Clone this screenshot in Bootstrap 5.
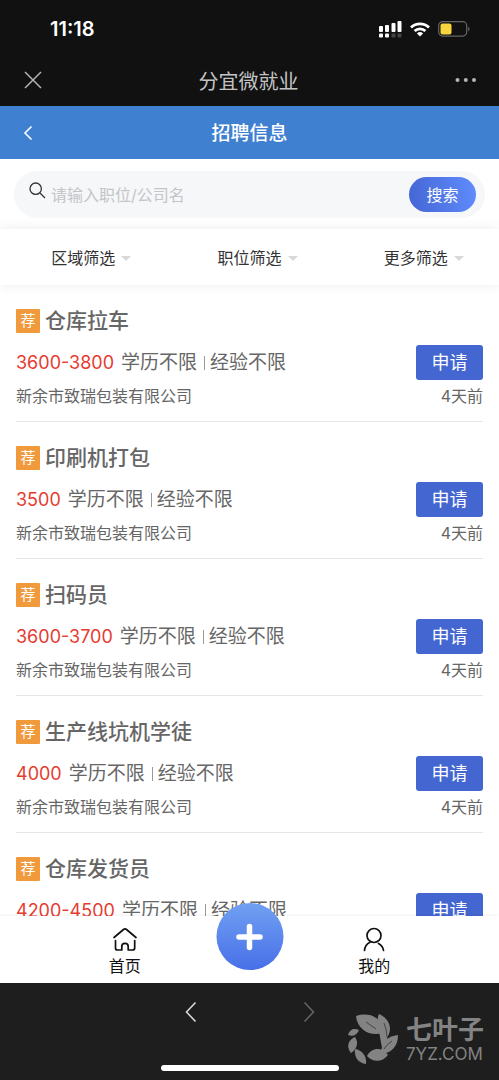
<!DOCTYPE html>
<html lang="zh-CN">
<head>
<meta charset="utf-8">
<meta name="viewport" content="width=device-width, initial-scale=1">
<title>分宜微就业 - 招聘信息</title>
<link href="https://cdn.jsdelivr.net/npm/bootstrap@5.3.0/dist/css/bootstrap.min.css" rel="stylesheet">
<style>
  body { font-family: Inter, "Noto Sans CJK SC", sans-serif; font-size: 16px; line-height: 24px; color: #666; background: #fff; }
  svg { display: block; }
  button { line-height: inherit; }
  .icon-btn { background: none; border: 0; padding: 0; display: block; }

  .phone-top { background: #111; color: #c4c4c4; }
  .status-row { height: 54px; padding: 4px 29px 0 50px; }
  .clock { color: #fff; font-size: 20px; font-weight: 600; }
  .wx-row { height: 52px; padding: 0 22px 0 24px; }
  .wx-title { font-size: 20px; font-weight: 400; padding-top: 3px; }

  .app-head { background: #3f80d1; color: #fff; height: 53px; padding: 0 22px; }
  .app-title { font-size: 19px; font-weight: 500; line-height: 24px; padding-top: 3px; }
  .side { width: 32px; }

  .search-area { padding: 12px 14px 11px; }
  .search-pill { background: #f5f7f9; height: 47px; padding: 0 9px 0 15px; }
  .search-input { border: 0; background: none; outline: 0; min-width: 0; padding: 0 5px; color: #333; }
  .search-input::placeholder { color: #c3c5c8; opacity: 1; }
  .search-btn { width: 67px; height: 35px; border: 0; color: #fff; background: linear-gradient(80deg, #4565d4, #608cfd); }

  .filters { height: 56px; box-shadow: 0 0 12px rgba(0, 0, 0, .08); }
  .filter-btn { background: none; border: 0; color: #333; padding: 2px 0 0 16px; gap: 6px; }
  .caret { border: 5px solid transparent; border-top-color: #d9d9d9; border-bottom: 0; }

  .jobs { flex: 1 1 0; min-height: 0; overflow-y: auto; scrollbar-width: none; padding: 0 16px; }
  .jobs::-webkit-scrollbar { display: none; }
  .job { border-bottom: 1px solid #e6e6e6; padding: 23px 0 13px; }
  .job-head { gap: 5px; }
  .tag { width: 24px; height: 24px; background: #f09a3c; color: #fff; border-radius: 1px; font-size: 15px; }
  .job-title { font-size: 21px; line-height: 26px; font-weight: 500; }
  .job-mid { height: 35px; margin-top: 11px; font-size: 19px; }
  .pay { color: #e63b30; font-size: 18px; margin-right: 7px; }
  .bar { width: 1px; height: 14px; background: #999; margin: 0 5px 0 7px; }
  .apply { background: #4366d1; color: #fff; border: 0; border-radius: 3px; width: 67px; height: 35px; font-size: 18px; }
  .job-foot { margin-top: 4px; }

  .tabs-bottom { height: 67px; background: #fff; box-shadow: 0 -1px 3px rgba(0, 0, 0, .06); }
  .tab-item { color: #111; padding-top: 10px; }
  .tab-item svg { margin-bottom: 2px; }
  .plus { width: 67px; height: 67px; top: -13px; border: 0; padding: 0; background: linear-gradient(#70a0f2, #4870e8); }

  .phone-bottom { background: #1e1e1e; height: 97px; }
  .history { top: 18px; gap: 106px; }
  .home-bar { width: 178px; height: 6px; background: #fff; bottom: 9px; }
  .logo-mark { right: 15px; top: 30px; color: #838383; gap: 6px; }
  .logo-cn { font-size: 26px; line-height: 30px; font-weight: 700; }
  .logo-en { font-size: 17px; line-height: 18px; }
</style>
</head>
<body>
<div class="vh-100 d-flex flex-column overflow-hidden">

  <header class="phone-top flex-shrink-0">
    <div class="status-row d-flex align-items-center justify-content-between">
      <span class="clock">11:18</span>
      <div class="d-flex align-items-center gap-2">
        <svg width="23" height="17" viewBox="0 0 23 17" fill="#fff" aria-hidden="true">
          <rect x="0" y="5" width="4" height="6" rx="1"/><rect x="6" y="4" width="4" height="7" rx="1"/><rect x="12.500" y="2" width="4" height="9" rx="1"/><rect x="18.500" y="0" width="4" height="11" rx="1"/>
          <rect x="0" y="12.500" width="4" height="4" rx="1"/><rect x="6" y="12.500" width="4" height="4" rx="1"/>
          <g fill="#444"><rect x="12.500" y="12.500" width="4" height="4" rx="1"/><rect x="18.500" y="12.500" width="4" height="4" rx="1"/></g>
        </svg>
        <svg width="20" height="15" viewBox="0 0 20 15" fill="none" stroke="#fff" stroke-width="2.800" aria-hidden="true">
          <path d="M1 5.500a12.800 12.800 0 0 1 18 0"/><path d="M4.600 9a7.800 7.800 0 0 1 10.800 0"/><path d="M10 14.500 6.900 11.400a4.500 4.500 0 0 1 6.200 0z" fill="#fff" stroke="none"/>
        </svg>
        <svg width="32" height="16" viewBox="0 0 32 16" aria-hidden="true">
          <rect x=".7" y=".7" width="28" height="14.400" rx="4" fill="none" stroke="#666" stroke-width="1.200"/><rect x="2.500" y="2.500" width="11" height="11" rx="2" fill="#f8d53d"/><path d="M30.300 5.500q2.400 2.400 0 5z" fill="#777"/>
        </svg>
      </div>
    </div>
    <div class="wx-row d-flex align-items-center justify-content-between">
      <button class="icon-btn" aria-label="关闭"><svg width="18" height="18" viewBox="0 0 18 18" fill="none" stroke="#b5b5b5" stroke-width="1.500"><path d="M1 1l16 16M17 1 1 17"/></svg></button>
      <span class="wx-title">分宜微就业</span>
      <button class="icon-btn" aria-label="更多"><svg width="22" height="6" viewBox="0 0 22 6" fill="#b5b5b5"><circle cx="2.500" cy="3" r="2"/><circle cx="10.800" cy="3" r="2"/><circle cx="19" cy="3" r="2"/></svg></button>
    </div>
  </header>

  <nav class="app-head flex-shrink-0 d-flex align-items-center justify-content-between">
    <button class="icon-btn side" aria-label="返回"><svg width="12" height="16" viewBox="0 0 12 16" fill="none" stroke="#fff" stroke-width="1.600"><path d="M9.500 1.500 3 8l6.500 6.500"/></svg></button>
    <h1 class="app-title mb-0">招聘信息</h1>
    <span class="side"></span>
  </nav>

  <form class="search-area flex-shrink-0" role="search">
    <div class="search-pill rounded-pill d-flex align-items-center">
      <label for="keyword" aria-label="搜索职位"><svg class="mb-2" width="17" height="17" viewBox="0 0 17 17" fill="none" stroke="#333" stroke-width="1.300"><circle cx="6.700" cy="6.700" r="5.700"/><path d="m11 11 5 5"/></svg></label>
      <input id="keyword" class="search-input flex-grow-1" type="text" placeholder="请输入职位/公司名">
      <button type="button" class="search-btn rounded-pill">搜索</button>
    </div>
  </form>

  <div class="filters flex-shrink-0 row g-0 align-items-center">
    <div class="col-4"><button class="filter-btn w-100 d-flex align-items-center justify-content-center">区域筛选<span class="caret"></span></button></div>
    <div class="col-4"><button class="filter-btn w-100 d-flex align-items-center justify-content-center">职位筛选<span class="caret"></span></button></div>
    <div class="col-4"><button class="filter-btn w-100 d-flex align-items-center justify-content-center">更多筛选<span class="caret"></span></button></div>
  </div>

  <main class="jobs">
    <article class="job">
      <div class="job-head d-flex align-items-center"><span class="tag d-flex align-items-center justify-content-center">荐</span><h2 class="job-title mb-0">仓库拉车</h2></div>
      <div class="job-mid d-flex align-items-center"><span class="pay">3600-3800</span><span>学历不限</span><span class="bar"></span><span>经验不限</span><button class="apply ms-auto">申请</button></div>
      <div class="job-foot d-flex justify-content-between"><span>新余市致瑞包装有限公司</span><time>4天前</time></div>
    </article>
    <article class="job">
      <div class="job-head d-flex align-items-center"><span class="tag d-flex align-items-center justify-content-center">荐</span><h2 class="job-title mb-0">印刷机打包</h2></div>
      <div class="job-mid d-flex align-items-center"><span class="pay">3500</span><span>学历不限</span><span class="bar"></span><span>经验不限</span><button class="apply ms-auto">申请</button></div>
      <div class="job-foot d-flex justify-content-between"><span>新余市致瑞包装有限公司</span><time>4天前</time></div>
    </article>
    <article class="job">
      <div class="job-head d-flex align-items-center"><span class="tag d-flex align-items-center justify-content-center">荐</span><h2 class="job-title mb-0">扫码员</h2></div>
      <div class="job-mid d-flex align-items-center"><span class="pay">3600-3700</span><span>学历不限</span><span class="bar"></span><span>经验不限</span><button class="apply ms-auto">申请</button></div>
      <div class="job-foot d-flex justify-content-between"><span>新余市致瑞包装有限公司</span><time>4天前</time></div>
    </article>
    <article class="job">
      <div class="job-head d-flex align-items-center"><span class="tag d-flex align-items-center justify-content-center">荐</span><h2 class="job-title mb-0">生产线坑机学徒</h2></div>
      <div class="job-mid d-flex align-items-center"><span class="pay">4000</span><span>学历不限</span><span class="bar"></span><span>经验不限</span><button class="apply ms-auto">申请</button></div>
      <div class="job-foot d-flex justify-content-between"><span>新余市致瑞包装有限公司</span><time>4天前</time></div>
    </article>
    <article class="job">
      <div class="job-head d-flex align-items-center"><span class="tag d-flex align-items-center justify-content-center">荐</span><h2 class="job-title mb-0">仓库发货员</h2></div>
      <div class="job-mid d-flex align-items-center"><span class="pay">4200-4500</span><span>学历不限</span><span class="bar"></span><span>经验不限</span><button class="apply ms-auto">申请</button></div>
    </article>
  </main>

  <nav class="tabs-bottom flex-shrink-0 position-relative d-flex">
    <a href="#" class="tab-item w-50 d-flex flex-column align-items-center text-decoration-none">
      <svg width="26" height="26" viewBox="0 0 26 26" fill="none" stroke="#111" stroke-width="1.700" stroke-linecap="round" stroke-linejoin="round"><path d="M2 11.500 11.500 3.500q1.500-1.200 3 0L24 11.500"/><path d="M3.500 14.500V22q0 2 2 2H9.800V20.500a3.200 3.200 0 0 1 6.400 0V24h4.300q2.200 0 2.200-2v-7.500"/></svg>
      首页
    </a>
    <a href="#" class="tab-item w-50 d-flex flex-column align-items-center text-decoration-none">
      <svg width="26" height="26" viewBox="0 0 26 26" fill="none" stroke="#111" stroke-width="1.700" stroke-linecap="round"><circle cx="13" cy="9.500" r="7"/><path d="M9 16.200Q4 18.500 3.500 24.500"/><path d="M17.500 17.500q4.500 2.500 5 7"/></svg>
      我的
    </a>
    <button class="plus rounded-circle position-absolute start-50 translate-middle-x d-flex align-items-center justify-content-center" aria-label="发布"><svg width="28" height="28" viewBox="0 0 28 28" stroke="#fff" stroke-width="5.500" stroke-linecap="round"><path d="M14 3.500v21M3.500 14h21"/></svg></button>
  </nav>

  <footer class="phone-bottom flex-shrink-0 position-relative">
    <div class="history position-absolute start-50 translate-middle-x d-flex">
      <button class="icon-btn" aria-label="后退"><svg width="12" height="22" viewBox="0 0 12 22" fill="none" stroke="#ddd" stroke-width="1.500"><path d="M10.500 1.500 1.500 11l9 9.500"/></svg></button>
      <button class="icon-btn" aria-label="前进"><svg width="12" height="22" viewBox="0 0 12 22" fill="none" stroke="#666" stroke-width="1.500"><path d="m1.500 1.500 9 9.500-9 9.500"/></svg></button>
    </div>
    <div class="home-bar rounded-pill position-absolute start-50 translate-middle-x"></div>
    <div class="logo-mark position-absolute d-flex align-items-center">
      <svg width="52" height="52" viewBox="0 0 52 52" fill="#838383" aria-hidden="true">
        <path d="M8 3C17 0 27 2 31 8q3 6 4 12C23 24 9 17 8 3z"/><path d="M31 1c9 4 13 12 10 20q-2 5-5 8C34 20 26 12 31 1z"/><path d="M50 22c0 11-6 18-17 19C33 30 39 23 50 22z"/><path d="M31 18q8 2 9 10l-5 12q-2-10-4-22z"/><path d="M19 43c5-9 15-9 21-1-6 8-16 7-21 1z"/><path d="M7 36c7 1 12 7 11 15C10 50 6 44 7 36z"/><path d="M7 24c4 6 2 12-4 16C-2 34 0 27 7 24z"/><path d="M0 22c2-6 6-7 11-5-2 5-6 7-11 5z"/>
        <g fill="none" stroke="#333" stroke-width=".8"><path d="m18 9 10 7M36 10q3 7 3 14M44 28q-5 3-8 8"/></g>
      </svg>
      <div>
        <div class="logo-cn">七叶子</div>
        <div class="logo-en">7YZ.COM</div>
      </div>
    </div>
  </footer>
</div>
<script src="https://cdn.jsdelivr.net/npm/bootstrap@5.3.0/dist/js/bootstrap.bundle.min.js"></script>
</body>
</html>
